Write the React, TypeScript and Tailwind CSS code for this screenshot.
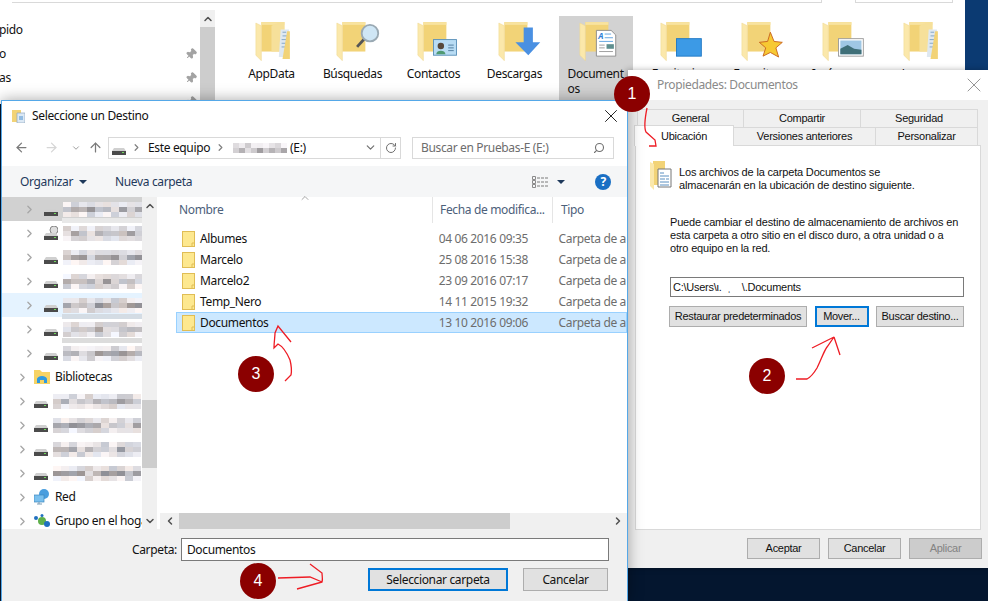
import React from 'react';
import { ArrowLeft, ArrowRight, ArrowUp, ChevronDown, ChevronLeft, ChevronRight, ChevronUp, Pin, RotateCw, Search, X } from 'lucide-react';

const UI = "font-['Noto_Sans','Open_Sans',sans-serif] tracking-[-0.35px]";
const LEGACY = "font-['Liberation_Sans',Arial,sans-serif]";

type Overlay = 'papers' | 'search' | 'contact' | 'download' | 'doc' | 'desktop' | 'star' | 'photo';

function BigFolder({ overlay }: { overlay: Overlay }) {
  return (
    <svg width="46" height="41" viewBox="0 0 50 44">
      <path d="M8 2h25v32H8z" fill="#f2d377" />
      <path d="M8 2h25v3H8z" fill="#f8e3a0" />
      {overlay === 'papers' && (
        <>
          <path d="M19 6l9-4h5v32H19z" fill="#f6e09a" />
          <path d="M29 10h9v30H27z" fill="#dfe8f0" />
          <path d="M31 13h4M31 17h5M30 21h5M30 25h6M30 29h5" stroke="#7ea2c4" strokeWidth="1" />
          <path d="M36 12h3v30h-8z" fill="#f2d377" />
        </>
      )}
      <path d="M2 3l6 3v38l-6-6z" fill="#fbe8ab" stroke="#eed58a" strokeWidth=".5" />
      {overlay === 'search' && (
        <>
          <path d="M24 29l9-10" stroke="#555" strokeWidth="3" />
          <circle cx="38" cy="14" r="9" fill="#cfe6f5" stroke="#9aa9b3" strokeWidth="2" />
        </>
      )}
      {overlay === 'contact' && (
        <>
          <rect x="19" y="21" width="25" height="17" fill="#b8dcf4" stroke="#5a90b8" />
          <circle cx="27" cy="28" r="3.5" fill="#57483a" />
          <path d="M22 37c0-5 10-5 10 0z" fill="#4f9a72" />
          <path d="M35 27h6M35 30h6M35 33h6" stroke="#4d7a9c" />
        </>
      )}
      {overlay === 'download' && <path d="M29 14h10v16h8L34 44 20 30h9z" transform="translate(0 -6)" fill="#4a90e2" />}
      {overlay === 'doc' && (
        <>
          <path d="M20 11h16l5 5v23H20z" fill="#fff" stroke="#8a8a8a" />
          <text x="22" y="20" fontSize="9" fontStyle="italic" fontWeight="700" fill="#2f7fd6">A</text>
          <path d="M29 15h7M29 19h9M23 23h15" stroke="#5aa0de" />
          <rect x="31" y="26" width="8" height="5" fill="#5f8f8f" />
          <path d="M23 27h6M23 30h6M23 34h15" stroke="#999" />
        </>
      )}
      {overlay === 'desktop' && <rect x="19" y="20" width="27" height="19" fill="#3c9ae6" stroke="#1f78c4" />}
      {overlay === 'star' && (
        <path d="M33 13l4 10 9 1-7 6 3 10-9-5-8 4 3-9-7-6 9-1z" fill="#f7c933" stroke="#c8641c" strokeWidth="1" />
      )}
      {overlay === 'photo' && (
        <>
          <rect x="19" y="20" width="27" height="19" fill="#fff" stroke="#9a9a9a" />
          <rect x="21" y="22" width="23" height="15" fill="#9fc7e4" />
          <path d="M21 31l8-4 7 4 8 1v5H21z" fill="#3f6f78" />
        </>
      )}
    </svg>
  );
}

function SmallFolder() {
  return (
    <svg width="13" height="16" viewBox="0 0 13 16" className="shrink-0">
      <rect x=".5" y=".5" width="12" height="15" fill="#fde88f" stroke="#e0bd55" />
      <path d="M10 15v-3h3" fill="none" stroke="#e0bd55" />
    </svg>
  );
}

function Drive({ disc }: { disc?: boolean }) {
  return (
    <svg width="14" height="14" viewBox="0 0 14 14" className="shrink-0">
      {disc && <circle cx="10" cy="4" r="4" fill="#ddd" stroke="#888" />}
      <path d="M2 7h10l2 3H0z" fill="#d0d0d0" />
      <rect y="10" width="14" height="4" fill="#4b4b4b" />
      <rect x="10" y="11" width="2" height="1" fill="#6fdc5c" />
    </svg>
  );
}

function Mosaic({ seed, width, rows = 3, cell = 8, tone = 'mix' }: { seed: number; width: number; rows?: number; cell?: number; tone?: 'mix' | 'grey' }) {
  const cols = Math.floor(width / cell);
  const cells = [];
  for (let i = 0; i < cols * rows; i++) {
    const n = Math.abs(Math.sin(seed * 13.7 + i * 7.31) * 1000) % 1;
    const rowEdge = Math.floor(i / cols) !== 1;
    const v = Math.round((rowEdge ? 205 : 145) + n * (rowEdge ? 45 : 85));
    const tint = tone === 'mix' ? Math.round((n * 97) % 12) - 6 : 0;
    cells.push(
      <div key={i} style={{ width: cell, height: 5, background: `rgb(${v + tint},${v - 3},${v - tint})` }} />
    );
  }
  return (
    <div className="flex flex-wrap shrink-0" style={{ width: cols * cell }}>
      {cells}
    </div>
  );
}

function NavRow({ children, indent = false, state, band }: { children: React.ReactNode; indent?: boolean; state?: 'selected' | 'hover'; band?: string }) {
  const bg = state === 'selected' ? 'bg-[#d1d1d1]' : state === 'hover' ? 'bg-[#e5f3ff]' : '';
  return (
    <div className={`relative flex h-6 shrink-0 items-center gap-[5px] ${indent ? 'pl-[21px]' : 'pl-[14px]'} ${bg}`}>
      <ChevronRight size={13} strokeWidth={2.4} className={`shrink-0 text-[#a6a6a6] ${indent ? 'mr-[3px]' : ''}`} />
      {children}
      {band && <div className={`absolute bottom-[-2px] left-[60px] h-[5px] w-[80px] ${band}`} />}
    </div>
  );
}

const FILES = [
  ['Albumes', '04 06 2016 09:35'],
  ['Marcelo', '25 08 2016 15:38'],
  ['Marcelo2', '23 09 2016 07:17'],
  ['Temp_Nero', '14 11 2015 19:32'],
  ['Documentos', '13 10 2016 09:06'],
];

const TILES: [string, Overlay][] = [
  ['AppData', 'papers'],
  ['Búsquedas', 'search'],
  ['Contactos', 'contact'],
  ['Descargas', 'download'],
  ['Documentos', 'doc'],
  ['Escritorio', 'desktop'],
  ['Favoritos', 'star'],
  ['Imágenes', 'photo'],
  ['Juegos', 'papers'],
];

function Explorer() {
  return (
    <div className={`absolute left-0 top-0 h-[104px] w-[965px] overflow-hidden bg-white ${UI}`}>
      <div className="ml-3 flex h-[3px]">
        <div className="h-[3px] w-[810px] border-b border-r border-[#d9d9d9]" />
        <div className="ml-[33px] h-[3px] w-[98px] border-b border-l border-r border-[#d9d9d9]" />
      </div>
      <div className="flex">
        <div className="flex w-[200px] flex-col pt-[15px] text-[12px] leading-[24px] text-[#111]">
          {['pido', 'o', 'as', ''].map((label, i) => (
            <div key={i} className="flex h-6 items-center justify-between pr-[3px]">
              <span className="-ml-[1px]">{label}</span>
              {i > 0 && <Pin size={12} className="rotate-45 fill-[#a3a3a3] text-[#a3a3a3]" />}
            </div>
          ))}
        </div>
        <div className="mt-[7px] flex h-[98px] w-[15px] flex-col bg-[#f0f0f0]">
          <div className="flex h-[17px] items-center justify-center">
            <ChevronUp size={12} strokeWidth={3} className="text-[#505050]" />
          </div>
          <div className="flex-1 bg-[#cdcdcd]" />
        </div>
        <div className="flex pl-4 pt-[13px]">
          {TILES.map(([label, overlay]) => {
            const active = label === 'Documentos';
            return (
              <div key={label} className="flex w-[81px] justify-center">
                <div className={`flex h-[88px] w-[74px] flex-col items-center pt-[4px] ${active ? 'bg-[#d2d2d2]' : ''}`}>
                  <div className="pl-[10px]"><BigFolder overlay={overlay} /></div>
                  {active ? (
                    <div className="mt-[5px] w-[72px] pl-[8px] text-[12px] leading-[15px] text-[#111]">Document<br />os</div>
                  ) : (
                    <div className="mt-[5px] w-[72px] text-center text-[12px] leading-[15px] text-[#111]">{label}</div>
                  )}
                </div>
              </div>
            );
          })}
        </div>
      </div>
    </div>
  );
}

function DestinationDialog() {
  return (
    <div className={`absolute left-[1px] top-[100px] flex h-[501px] w-[627px] flex-col border border-b-0 border-[#55a8e8] bg-white shadow-[0_0_14px_rgba(0,0,0,0.35)] ${UI}`}>
      <div className="flex h-[30px] shrink-0 items-center pl-[10px] pr-[5px]">
        <div className="mr-[7px] flex h-[14px] w-[13px] items-center">
          <svg width="13" height="14" viewBox="0 0 13 14">
            <path d="M0 1h9v12H0z" fill="#f2d377" />
            <path d="M5 4h8v10H5z" fill="#dce9f5" stroke="#8fa8bd" strokeWidth=".7" />
            <path d="M7 8h4M7 10h4" stroke="#4a90d0" />
          </svg>
        </div>
        <span className="flex-1 text-[12px] text-[#111]">Seleccione un Destino</span>
        <X size={22} strokeWidth={1} className="text-[#111]" />
      </div>
      <div className="flex h-[35px] shrink-0 items-center pb-[2px] pl-[12px] text-[#111]">
        <ArrowLeft size={15} strokeWidth={2} className="text-[#7a7a7a]" />
        <ArrowRight size={15} strokeWidth={2} className="ml-[15px] text-[#d6d6d6]" />
        <ChevronDown size={10} strokeWidth={2.4} className="ml-[12px] text-[#a0a0a0]" />
        <ArrowUp size={15} strokeWidth={2} className="ml-[7px] text-[#7a7a7a]" />
        <div className="ml-[5px] flex h-[22px] w-[293px] items-center border border-[#d9d9d9] pl-[3px] text-[12px]">
          <Drive />
          <ChevronRight size={11} strokeWidth={2.6} className="ml-[5px] text-[#808080]" />
          <span className="ml-[6px]">Este equipo</span>
          <ChevronRight size={11} strokeWidth={2.6} className="ml-[5px] text-[#808080]" />
          <div className="ml-[7px]"><Mosaic seed={3} width={54} rows={2} cell={6} tone="grey" /></div>
          <span className="ml-[3px]">(E:)</span>
          <div className="flex-1" />
          <ChevronDown size={13} strokeWidth={2.2} className="mr-[3px] text-[#707070]" />
          <div className="flex h-full w-[20px] items-center justify-center border-l border-[#d9d9d9]">
            <RotateCw size={12} strokeWidth={2} className="text-[#707070]" />
          </div>
        </div>
        <div className="ml-[11px] flex h-[22px] w-[202px] items-center justify-between border border-[#d9d9d9] pl-2 pr-2 text-[12px] text-[#6d6d6d]">
          <span>Buscar en Pruebas-E (E:)</span>
          <Search size={12} strokeWidth={2.2} className="-scale-x-100 text-[#707070]" />
        </div>
      </div>
      <div className="flex h-[31px] shrink-0 items-center bg-[#f5f6f7] pl-[18px] text-[12px] text-[#1e395b]">
        <span>Organizar</span>
        <span className="ml-[6px] border-x-[4px] border-t-[4px] border-x-transparent border-t-[#1e395b]" />
        <span className="ml-[28px]">Nueva carpeta</span>
        <div className="ml-[340px]">
          <svg width="16" height="12" viewBox="0 0 16 12">
            <path d="M.5.5h3v3h-3zM.5 4.5h3v3h-3zM.5 8.5h3v3h-3z" fill="none" stroke="#8a8a8a" />
            <path d="M5 2h11M5 6h11M5 10h11" stroke="#7a7a7a" strokeDasharray="3 1" />
          </svg>
        </div>
        <span className="ml-[9px] border-x-[4px] border-t-[4px] border-x-transparent border-t-[#1e395b]" />
        <div className="ml-[30px] flex h-4 w-4 items-center justify-center rounded-full bg-[#1a6fc4] text-[12px] font-bold leading-none text-white">?</div>
      </div>
      <div className="flex h-[332px] shrink-0">
        <div className="flex w-[140px] flex-col overflow-hidden text-[12px] text-[#111]">
          <NavRow indent state="selected" band="bg-[#e8e8e8]"><Drive /><Mosaic seed={1} width={80} /></NavRow>
          <NavRow indent><Drive disc /><Mosaic seed={2} width={80} /></NavRow>
          <NavRow indent><Drive /><Mosaic seed={4} width={80} /></NavRow>
          <NavRow indent><Drive /><Mosaic seed={5} width={80} /></NavRow>
          <NavRow indent state="hover" band="bg-[#d4dce4]"><Drive /><Mosaic seed={6} width={80} /></NavRow>
          <NavRow indent band="bg-[#dcdcdc]"><Drive /><Mosaic seed={7} width={80} /></NavRow>
          <NavRow indent><Drive /><Mosaic seed={8} width={80} /></NavRow>
          <NavRow>
            <svg width="16" height="14" viewBox="0 0 16 14" className="shrink-0">
              <path d="M0 0h6l2 2h8v12H0z" fill="#f6d365" />
              <path d="M3 13V9a5 3 0 0 1 10 0v4h-3v-3H6v3z" fill="#2f9ae0" />
            </svg>
            <span>Bibliotecas</span>
          </NavRow>
          <NavRow><Drive /><Mosaic seed={9} width={88} /></NavRow>
          <NavRow><Drive /><Mosaic seed={10} width={88} /></NavRow>
          <NavRow><Drive /><Mosaic seed={11} width={88} /></NavRow>
          <NavRow><Drive /><Mosaic seed={12} width={88} /></NavRow>
          <NavRow>
            <svg width="16" height="16" viewBox="0 0 16 16" className="shrink-0">
              <circle cx="10" cy="5" r="5" fill="#4a9ede" />
              <rect y="6" width="10" height="7" fill="#7ac0ee" stroke="#3d86bd" strokeWidth=".7" />
              <path d="M3 15h5M5 13v2" stroke="#7a9bb3" />
            </svg>
            <span>Red</span>
          </NavRow>
          <NavRow>
            <svg width="16" height="14" viewBox="0 0 16 14" className="shrink-0">
              <circle cx="2" cy="4" r="2" fill="#1f6fc0" />
              <circle cx="8" cy="1.5" r="1.5" fill="#1f6fc0" />
              <circle cx="8" cy="7" r="4" fill="#5fb04b" />
              <circle cx="13" cy="10" r="3" fill="#1f6fc0" />
            </svg>
            <span className="whitespace-nowrap">Grupo en el hogar</span>
          </NavRow>
        </div>
        <div className="flex w-[15px] shrink-0 flex-col bg-[#f0f0f0]">
          <div className="flex h-[17px] items-center justify-center">
            <ChevronUp size={12} strokeWidth={3} className="text-[#505050]" />
          </div>
          <div className="h-[186px]" />
          <div className="h-[68px] bg-[#cdcdcd]" />
          <div className="flex-1" />
          <div className="flex h-[17px] items-center justify-center">
            <ChevronDown size={12} strokeWidth={3} className="text-[#505050]" />
          </div>
        </div>
        <div className="flex min-w-0 flex-1 flex-col pl-[3px]">
          <div className="relative flex h-[26px] shrink-0 text-[12px] text-[#4c607a]">
            <ChevronUp size={12} strokeWidth={1.5} className="absolute left-[139px] top-[-5px] text-[#8a8a8a]" />
            <div className="w-[272px] pl-[19px] pt-[4px]">Nombre</div>
            <div className="w-[120px] truncate border-l border-[#e5e5e5] pl-[7px] pt-[4px]">Fecha de modifica...</div>
            <div className="flex-1 border-l border-[#e5e5e5] pl-[8px] pt-[4px]">Tipo</div>
          </div>
          <div className="flex flex-1 flex-col overflow-hidden pl-[16px] pt-[5px] text-[12px]">
            {FILES.map(([name, date]) => {
              const active = name === 'Documentos';
              return (
                <div key={name} className={`flex h-[21px] shrink-0 items-center whitespace-nowrap border ${active ? 'border-[#99d1ff] bg-[#cce8ff]' : 'border-transparent'}`}>
                  <div className="ml-[5px]"><SmallFolder /></div>
                  <span className="ml-[5px] w-[241px] text-[#111]">{name}</span>
                  <span className="w-[121px] text-[#6d6d6d]">{date}</span>
                  <span className="text-[#6d6d6d]">Carpeta de a</span>
                </div>
              );
            })}
          </div>
          <div className="flex h-[16px] shrink-0 items-center bg-[#f0f0f0]">
            <div className="flex w-[19px] justify-center">
              <ChevronLeft size={12} strokeWidth={3} className="text-[#505050]" />
            </div>
            <div className="h-full w-[331px] bg-[#cdcdcd]" />
            <div className="flex-1" />
            <ChevronRight size={12} strokeWidth={3} className="mr-[3px] text-[#505050]" />
          </div>
        </div>
      </div>
      <div className="relative flex-1 bg-[#f0f0f0] text-[12px] text-[#111]">
        <div className="flex items-center pl-[130px] pt-[9px]">
          <span>Carpeta:</span>
          <div className="ml-[4px] flex h-[23px] w-[428px] items-center border border-[#7a7a7a] bg-white pl-[5px]">Documentos</div>
        </div>
        <div className="flex justify-end gap-[15px] pr-[19px] pt-[7px]">
          <button className="h-[23px] w-[140px] border-2 border-[#0078d7] bg-[#e1e1e1] text-[12px]">Seleccionar carpeta</button>
          <button className="h-[23px] w-[85px] border border-[#adadad] bg-[#e1e1e1] text-[12px]">Cancelar</button>
        </div>
      </div>
    </div>
  );
}

function PropsDialog() {
  const tab = 'flex items-center justify-center border-r border-t border-[#d9d9d9] bg-[#f0f0f0]';
  const btn = 'h-[21px] border border-[#adadad] bg-[#e1e1e1] text-[11px] tracking-[-0.3px]';
  return (
    <div className={`absolute left-[628px] top-[70px] flex h-[498px] w-[360px] flex-col bg-[#f0f0f0] shadow-[-2px_0_6px_rgba(0,0,0,0.3)] ${LEGACY}`}>
      <div className="flex h-[30px] shrink-0 items-center bg-white pl-[29px] pr-[2px]">
        <span className={`flex-1 text-[12px] text-[#8a8a8a] ${UI}`}>Propiedades: Documentos</span>
        <X size={24} strokeWidth={0.9} className="text-[#8a8a8a]" />
      </div>
      <div className="ml-[6px] mt-[9px] flex w-[344px] flex-col text-[11px] tracking-[-0.25px] text-[#111]">
        <div className="ml-[3px] flex h-[18px] w-[341px]">
          <div className={`w-[107px] border-l ${tab}`}>General</div>
          <div className={`w-[117px] ${tab}`}>Compartir</div>
          <div className={`w-[117px] ${tab}`}>Seguridad</div>
        </div>
        <div className="relative ml-[3px] flex h-[18px] w-[341px] pl-[97px]">
          <div className={`w-[142px] ${tab}`}>Versiones anteriores</div>
          <div className={`w-[102px] ${tab}`}>Personalizar</div>
          <div className="absolute left-[-3px] top-[-2px] flex h-[21px] w-[100px] items-center justify-center border-x border-t border-[#d9d9d9] bg-white">Ubicación</div>
        </div>
      </div>
      <div className="ml-[7px] flex h-[385px] w-[346px] shrink-0 flex-col border border-[#d9d9d9] bg-white pl-[34px] pr-[16px] text-[11px] leading-[13px] tracking-[-0.17px] text-[#111]">
        <div className="-ml-[20px] flex pt-[15px]">
          <svg width="23" height="30" viewBox="0 0 23 30" className="shrink-0">
            <path d="M3 0h12v24H3z" fill="#f2d377" />
            <path d="M0 1l4 2v26l-4-4z" fill="#fbe8ab" />
            <path d="M8 8h13v18H8z" fill="#fff" stroke="#777" />
            <path d="M10 12h4M10 15h9M10 18h5M16 18h3M10 21h9M10 24h9" stroke="#5a8fc0" />
          </svg>
          <p className="ml-[6px] whitespace-nowrap pt-[5px]">Los archivos de la carpeta Documentos se<br />almacenarán en la ubicación de destino siguiente.</p>
        </div>
        <p className="whitespace-nowrap pt-[24px]">Puede cambiar el destino de almacenamiento de archivos en<br />esta carpeta a otro sitio en el disco duro, a otra unidad o a<br />otro equipo en la red.</p>
        <div className="mt-[22px] flex h-5 w-[294px] items-center whitespace-pre border border-[#7a7a7a] pl-[2px] tracking-[-0.25px]">{'C:\\Users\\ι.  ˌ    \\.Documents'}</div>
        <div className="-ml-[1px] mt-[9px] flex w-[295px] justify-between">
          <button className={`${btn} w-[138px]`}>Restaurar predeterminados</button>
          <button className={`${btn} w-[54px] border-2 !border-[#0078d7]`}>Mover...</button>
          <button className={`${btn} w-[88px]`}>Buscar destino...</button>
        </div>
      </div>
      <div className="mr-[6px] mt-[8px] flex justify-end gap-2 text-[#111]">
        <button className={`${btn} w-[73px]`}>Aceptar</button>
        <button className={`${btn} w-[73px]`}>Cancelar</button>
        <button className={`${btn} w-[73px] !bg-[#cccccc] text-[#838383]`}>Aplicar</button>
      </div>
    </div>
  );
}

function Callout({ n, className }: { n: number; className: string }) {
  return (
    <div className={`absolute flex h-9 w-9 items-center justify-center rounded-full bg-[#8b0000] text-[16px] text-white ${LEGACY} ${className}`}>
      {n}
    </div>
  );
}

export default function App() {
  return (
    <div className="relative h-[601px] w-[988px] overflow-hidden bg-[#04162f]">
      <div className="absolute left-[965px] top-0 h-[80px] w-[23px] bg-[#0b3a72]" />
      <Explorer />
      <PropsDialog />
      <DestinationDialog />
      <svg className="pointer-events-none absolute left-0 top-0" width="988" height="601" fill="none" stroke="#ee1c24" strokeWidth="1.3">
        <path d="M647 108c-2 10-3 20-1 24l9 8 1 6h-7" />
        <path d="M796 379h11c4-2 7-6 10-11 4-8 7-17 10-21l7-10-22 11M834 337l6 18" />
        <path d="M285 381l6-6c1-5 0-11-1-15-3-7-8-14-12-16l-4 4c0-6 1-11 1-15l3-7 13 16" />
        <path d="M278 578l32-1 12 5c1-3 0-6 0-9l-12-9M322 582l-25 7" />
      </svg>
      <Callout n={1} className="left-[614px] top-[76px]" />
      <Callout n={2} className="left-[749px] top-[358px]" />
      <Callout n={3} className="left-[238px] top-[356px]" />
      <Callout n={4} className="left-[240px] top-[563px]" />
    </div>
  );
}
